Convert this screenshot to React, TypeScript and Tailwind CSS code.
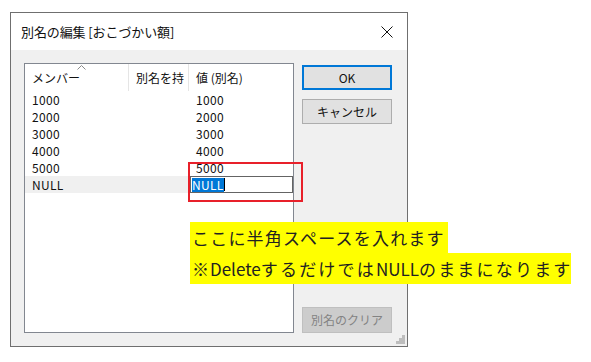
import React from 'react';

const rows = ['1000', '2000', '3000', '4000', '5000'];

const ui = { fontFamily: '"Noto Sans CJK JP", "Noto Sans", sans-serif' };

function CloseIcon() {
  return (
    <svg width="12" height="12" viewBox="0 0 12 12" className="block">
      <path d="M0.5 0.5 L11.5 11.5 M11.5 0.5 L0.5 11.5" stroke="#111" strokeWidth="1" />
    </svg>
  );
}

function Grip() {
  return (
    <svg width="9" height="9" viewBox="0 0 9 9" className="block">
      <g fill="#bdbdbd">
        <rect x="6" y="0" width="3" height="3" />
        <rect x="3" y="3" width="3" height="3" />
        <rect x="6" y="3" width="3" height="3" />
        <rect x="0" y="6" width="3" height="3" />
        <rect x="3" y="6" width="3" height="3" />
        <rect x="6" y="6" width="3" height="3" />
      </g>
    </svg>
  );
}

export default function App() {
  return (
    <div className="relative w-[591px] h-[362px] bg-white pl-[10px] pt-[12px] text-[#111]" style={ui}>
      <div className="w-[398px] h-[335px] border border-[#6f6f6f] flex flex-col">
        {/* title bar */}
        <div className="h-[37px] bg-white flex items-center justify-between pl-[10px] pr-[14px]">
          <span className="text-[13px] tracking-[-0.1px]">別名の編集 [おこづかい額]</span>
          <CloseIcon />
        </div>

        {/* body */}
        <div className="relative flex-1 bg-[#f0f0f0] flex pl-[13px] pt-[13px] pb-[13px]">
          <div className="w-[270px] h-[270px] border border-[#828790] bg-white flex flex-col text-[12px]">
            <div className="relative h-[27px] flex items-center shrink-0">
              <svg width="9" height="5" viewBox="0 0 9 5" className="absolute left-[52px] top-[1px]">
                <path d="M0.5 4.5 L4.5 0.5 L8.5 4.5" fill="none" stroke="#8a8a8a" strokeWidth="1" />
              </svg>
              <div className="w-[104px] h-full flex items-center pl-[7px] border-r border-[#e5e5e5]">メンバー</div>
              <div className="w-[60px] h-full flex items-center pl-[7px] border-r border-[#e5e5e5] overflow-hidden whitespace-nowrap">別名を持</div>
              <div className="flex-1 h-full flex items-center pl-[7px]">値 (別名)</div>
            </div>
            {rows.map((r) => (
              <div key={r} className="h-[17px] flex items-center tracking-[0.3px]">
                <div className="w-[164px] pl-[7px]">{r}</div>
                <div className="pl-[7px]">{r}</div>
              </div>
            ))}
            <div className="h-[17px] flex items-stretch tracking-[0.3px]">
              <div className="w-[165px] bg-[#f0f0f0] flex items-center pl-[7px]">NULL</div>
              <div className="flex-1 border border-[#646464] bg-white flex items-center pl-[1px]">
                <span className="bg-[#0078d7] text-white leading-[14px]">NULL</span>
                <span className="w-px h-[13px] bg-black"></span>
              </div>
            </div>
          </div>

          <div className="ml-[8px] w-[90px] flex flex-col pt-[2px] text-[12px]">
            <div className="h-[25px] border-2 border-[#0078d7] bg-[#e1e1e1] flex items-center justify-center">OK</div>
            <div className="mt-[9px] h-[25px] border border-[#adadad] bg-[#e1e1e1] flex items-center justify-center">キャンセル</div>
            <div className="mt-auto h-[26px] border border-[#bfbfbf] bg-[#cccccc] text-[#838383] flex items-center justify-center">別名のクリア</div>
          </div>

          <div className="absolute right-[2px] bottom-[2px]">
            <Grip />
          </div>
        </div>
      </div>

      {/* annotation overlays */}
      <div className="absolute left-[188px] top-[162px] w-[115px] h-[40px] border-2 border-[#e8202a]"></div>

      <div className="absolute left-[190px] top-[222px] flex flex-col items-start text-[17px] text-[#222]">
        <div className="h-[31px] w-[258px] bg-[#ffff00] flex items-center pl-[2px] tracking-[1.2px] whitespace-nowrap">
          ここに半角スペースを入れます
        </div>
        <div className="h-[31px] w-[381px] bg-[#ffff00] flex items-center pl-[2px] whitespace-nowrap">
          <span className="tracking-[1px]">※</span>
          <span>Delete</span>
          <span className="tracking-[2.2px]">するだけでは</span>
          <span>NULL</span>
          <span className="tracking-[2.2px]">のままになります</span>
        </div>
      </div>
    </div>
  );
}
